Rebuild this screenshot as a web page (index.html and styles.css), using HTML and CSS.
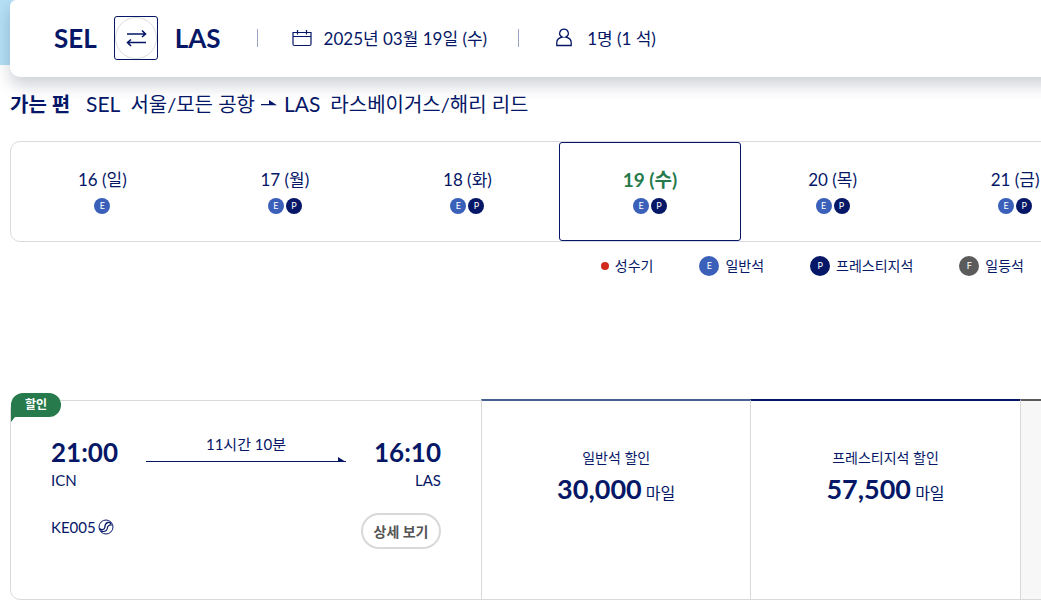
FILE: index.html
```
<!DOCTYPE html>
<html lang="ko">
<head>
    <meta charset="UTF-8">
    <meta name="viewport" content="width=device-width, initial-scale=1.0">
    <title>보너스 항공권 예매</title>
    <link rel="stylesheet" href="styles.css">
</head>
<body>
    <header class="topbar">
        <div class="search">
            <span class="city">SEL</span>
            <button class="swap" type="button" aria-label="출발지와 도착지 바꾸기">
                <svg width="42" height="42" viewBox="0 0 42 42" fill="none">
                    <circle cx="21" cy="21" r="20.5" stroke="#dcdcdc"/>
                    <path d="M12 17H30.500M27 13.500L30.500 17L27 20M31 25.500H12.500M16 22.500L12.500 25.500L16 29" stroke="#051766" stroke-width="1.6"/>
                </svg>
            </button>
            <span class="city">LAS</span>
            <span class="bar bar-first"></span>
            <svg class="icon" width="20" height="18" viewBox="0 0 20 18" fill="none" stroke="#051766" stroke-width="1.2">
                <path d="M1 3.500H19V15Q19 16.500 17.500 16.500H2.500Q1 16.500 1 15ZM1 7.500H19M5.500 1V5.500M14.500 1V5.500"/>
            </svg>
            <span class="info info-date">2025년 03월 19일 (수)</span>
            <span class="bar"></span>
            <svg class="icon icon-person" width="16" height="19" viewBox="0 0 16 19" fill="none" stroke="#051766" stroke-width="1.3">
                <path d="M6.300 9C3.300 7.800 3.300 5.800 3.900 3.900C5.300 0.200 10.700 0.200 12.100 3.900C12.700 5.800 12.700 7.800 9.700 9C12.700 9.700 15.200 11.500 15.200 14.500V17.500H0.800V14.500C0.800 11.500 3.300 9.700 6.300 9Z"/>
            </svg>
            <span class="info">1명 (1 석)</span>
        </div>
    </header>

    <main class="page">
        <h1 class="route">
            <strong>가는 편</strong>
            <span class="code">SEL</span>
            <span class="place">서울/모든 공항</span>
            <svg width="17" height="6" viewBox="0 0 17 6"><path d="M0 4H8V0L16 5.200H0Z" fill="#051766"/></svg>
            <span class="code">LAS</span>
            <span class="place">라스베이거스/해리 리드</span>
        </h1>

        <div class="dates">
            <button class="date" type="button">16 (일)<span class="seats"><i class="seat economy">E</i></span></button>
            <button class="date" type="button">17 (월)<span class="seats"><i class="seat economy">E</i><i class="seat prestige">P</i></span></button>
            <button class="date" type="button">18 (화)<span class="seats"><i class="seat economy">E</i><i class="seat prestige">P</i></span></button>
            <button class="date selected" type="button">19 (수)<span class="seats"><i class="seat economy">E</i><i class="seat prestige">P</i></span></button>
            <button class="date" type="button">20 (목)<span class="seats"><i class="seat economy">E</i><i class="seat prestige">P</i></span></button>
            <button class="date" type="button">21 (금)<span class="seats"><i class="seat economy">E</i><i class="seat prestige">P</i></span></button>
        </div>

        <ul class="legend">
            <li><i class="dot"></i>성수기</li>
            <li><i class="seat large economy">E</i>일반석</li>
            <li><i class="seat large prestige">P</i>프레스티지석</li>
            <li><i class="seat large first">F</i>일등석</li>
        </ul>

        <section class="flight">
            <span class="badge">할인</span>
            <div class="schedule">
                <div class="times">
                    <div>
                        <div class="time">21:00</div>
                        <div class="airport">ICN</div>
                    </div>
                    <div class="duration">
                        <span>11시간 10분</span>
                        <svg width="100%" height="6">
                            <rect y="4" width="100%" height="1" fill="#051766"/>
                            <svg x="100%" overflow="visible"><path d="M-8 0L0 5H-8Z" fill="#051766"/></svg>
                        </svg>
                    </div>
                    <div class="arrival">
                        <div class="time">16:10</div>
                        <div class="airport">LAS</div>
                    </div>
                </div>
                <div class="details">
                    <span class="number">KE005
                        <svg width="16" height="16" viewBox="0 0 16 16" fill="none" stroke="#051766">
                            <circle cx="8" cy="8" r="7" stroke-width="1"/>
                            <path d="M1.500 9.500C3 11.500 6.500 11 6.800 8.500C7 6 8 3.800 10 3.500C11.500 3.300 12.600 4 12.800 5" stroke-width="1.300"/>
                            <path d="M3 12C5 13 8.800 12.500 9.300 9.500C9.500 7 11 5.500 14 6" stroke-width="1.200"/>
                        </svg>
                    </span>
                    <button class="more" type="button">상세 보기</button>
                </div>
            </div>
            <div class="fare fare-economy">
                <div class="fare-name">일반석 할인</div>
                <div class="miles"><strong>30,000</strong> 마일</div>
            </div>
            <div class="fare fare-prestige">
                <div class="fare-name">프레스티지석 할인</div>
                <div class="miles"><strong>57,500</strong> 마일</div>
            </div>
            <div class="fare fare-first"></div>
        </section>
    </main>
</body>
</html>
```
FILE: styles.css
```
* {
    box-sizing: border-box;
}
body {
    margin: 0;
    overflow-x: hidden;
    background-color: #fff;
    color: #051766;
    font-family: Lato, "Noto Sans CJK KR", sans-serif;
    font-size: 17px;
}
button {
    padding: 0;
    background: none;
    color: inherit;
    font: inherit;
    cursor: pointer;
}
.topbar {
    min-width: 1300px;
    padding: 0 10px;
    background: linear-gradient(#b4dff5, #b4dff5) no-repeat;
    background-size: 100% 65px;
}
.search {
    display: flex;
    align-items: center;
    height: 77px;
    padding: 0 44px 2px;
    border-radius: 6px 6px 10px 10px;
    background-color: #fff;
    box-shadow: 0 8px 16px rgba(0, 18, 50, 0.2);
}
.city {
    font-size: 26px;
    font-weight: 700;
}
.swap {
    display: flex;
    width: 44px;
    height: 44px;
    margin: 0 17px;
    border: 1px solid #051766;
    border-radius: 3px;
}
.bar {
    width: 1px;
    height: 18px;
    background-color: #9ca3c2;
}
.bar-first {
    margin-left: 36px;
}
.icon {
    margin: 0 12px 0 34px;
}
.icon-person {
    margin-left: 37px;
    margin-right: 15px;
}
.info-date {
    margin-right: 31px;
}

.page {
    min-width: 1300px;
    padding: 0 10px;
}
.route {
    display: flex;
    align-items: center;
    gap: 6px;
    height: 28px;
    margin: 12px 0 24px;
    font-size: 20px;
    font-weight: 400;
}
.route strong {
    margin-right: 10px;
    font-weight: 700;
}
.route .code {
    margin-right: 4px;
    font-size: 21px;
}
.dates {
    display: grid;
    grid-template-columns: repeat(7, 1fr);
    height: 101px;
    border: 1px solid #d9dbe1;
    border-radius: 10px;
}
.date {
    display: flex;
    flex-direction: column;
    align-items: center;
    justify-content: center;
    gap: 6px;
    padding-bottom: 2px;
    border: 1px solid transparent;
    border-radius: 3px;
    line-height: 24px;
}
.date.selected {
    border-color: #051766;
    color: #267a4c;
    font-size: 19px;
    font-weight: 700;
}
.seats {
    display: flex;
    gap: 2px;
}
.seat {
    display: flex;
    align-items: center;
    justify-content: center;
    width: 16px;
    height: 16px;
    border-radius: 50%;
    color: #fff;
    font-size: 9px;
    font-style: normal;
    font-weight: 400;
    line-height: 16px;
}
.large {
    width: 20px;
    height: 20px;
}
.economy {
    background-color: #3b60b9;
}
.prestige {
    background-color: #051766;
}
.first {
    background-color: #5c5b5b;
}
.legend {
    display: flex;
    justify-content: flex-end;
    gap: 46px;
    margin: 14px 0 0;
    padding: 0 266px 0 0;
    list-style: none;
    font-size: 14px;
    line-height: 20px;
}
.legend li {
    display: flex;
    align-items: center;
    gap: 6px;
}
.dot {
    width: 8px;
    height: 8px;
    border-radius: 50%;
    background-color: #d32a1e;
}

.flight {
    position: relative;
    display: grid;
    grid-template-columns: 470px repeat(3, 1fr);
    min-height: 200px;
    margin-top: 124px;
    border: 1px solid #d9d9d9;
    border-radius: 10px;
}
.badge {
    position: absolute;
    top: -8px;
    left: 0;
    width: 50px;
    border-radius: 12px 12px 12px 0;
    background-color: #267a4c;
    color: #fff;
    font-size: 12px;
    font-weight: 700;
    line-height: 24px;
    text-align: center;
}
.badge::after {
    content: "";
    position: absolute;
    top: 24px;
    left: 0;
    border-top: 5px solid #267a4c;
    border-right: 4px solid transparent;
}
.schedule {
    padding: 35px 40px 0;
}
.times {
    display: flex;
    justify-content: space-between;
}
.time {
    font-size: 26px;
    font-weight: 700;
    line-height: 32px;
}
.airport {
    line-height: 24px;
    font-size: 15px;
}
.arrival {
    text-align: right;
}
.duration {
    flex: 1;
    margin: 0 28px;
    font-size: 15px;
    line-height: 16px;
    text-align: center;
}
.duration svg {
    display: block;
    margin-top: 5px;
}
.details {
    display: flex;
    justify-content: space-between;
    align-items: flex-start;
    margin-top: 21px;
}
.number {
    display: flex;
    align-items: center;
    gap: 2px;
    font-size: 15px;
    line-height: 28px;
}
.more {
    width: 80px;
    height: 36px;
    border: 2px solid #d9d9d9;
    border-radius: 18px;
    color: #555;
    font-size: 14px;
    font-weight: 700;
}
.fare {
    margin-top: -2px;
    padding-top: 47px;
    border-top: 2px solid #46618f;
    border-left: 1px solid #d9d9d9;
    text-align: center;
}
.fare-prestige {
    border-top-color: #051766;
}
.fare-first {
    border-top-color: #5c5b5b;
    background-color: #f7f7f7;
}
.fare-name {
    font-size: 14px;
    line-height: 20px;
}
.miles {
    font-size: 16px;
    line-height: 42px;
}
.miles strong {
    font-size: 27px;
}
```
